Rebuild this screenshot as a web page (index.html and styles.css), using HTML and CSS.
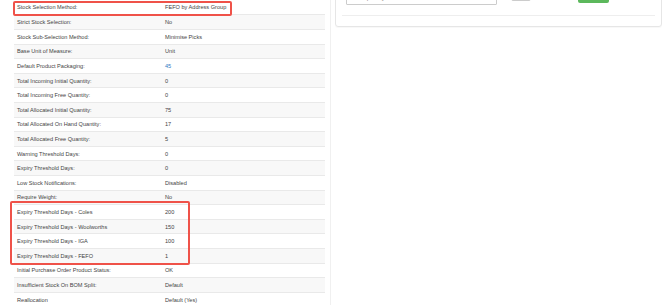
FILE: index.html
```html
<!doctype html>
<html lang="en">
    <head>
        <meta charset="UTF-8" />
        <meta name="viewport" content="width=device-width, initial-scale=1.0" />
        <title>Product Stock Settings</title>
        <link rel="stylesheet" href="styles.css">
    </head>
    <body>
        <div class="page">
            <div class="left">
                <table class="details">
                    <tr><td class="label">Stock Selection Method:</td><td>FEFO by Address Group</td></tr>
                    <tr><td class="label">Strict Stock Selection:</td><td>No</td></tr>
                    <tr><td class="label">Stock Sub-Selection Method:</td><td>Minimise Picks</td></tr>
                    <tr><td class="label">Base Unit of Measure:</td><td>Unit</td></tr>
                    <tr><td class="label">Default Product Packaging:</td><td><a href="#">45</a></td></tr>
                    <tr><td class="label">Total Incoming Initial Quantity:</td><td>0</td></tr>
                    <tr><td class="label">Total Incoming Free Quantity:</td><td>0</td></tr>
                    <tr><td class="label">Total Allocated Initial Quantity:</td><td>75</td></tr>
                    <tr><td class="label">Total Allocated On Hand Quantity:</td><td>17</td></tr>
                    <tr><td class="label">Total Allocated Free Quantity:</td><td>5</td></tr>
                    <tr><td class="label">Warning Threshold Days:</td><td>0</td></tr>
                    <tr><td class="label">Expiry Threshold Days:</td><td>0</td></tr>
                    <tr><td class="label">Low Stock Notifications:</td><td>Disabled</td></tr>
                    <tr><td class="label">Require Weight:</td><td>No</td></tr>
                    <tr><td class="label">Expiry Threshold Days - Coles</td><td>200</td></tr>
                    <tr><td class="label">Expiry Threshold Days - Woolworths</td><td>150</td></tr>
                    <tr><td class="label">Expiry Threshold Days - IGA</td><td>100</td></tr>
                    <tr><td class="label">Expiry Threshold Days - FEFO</td><td>1</td></tr>
                    <tr><td class="label">Initial Purchase Order Product Status:</td><td>OK</td></tr>
                    <tr><td class="label">Insufficient Stock On BOM Split:</td><td>Default</td></tr>
                    <tr><td class="label">Reallocation</td><td>Default (Yes)</td></tr>
                </table>
                <div class="highlight highlight-method"></div>
                <div class="highlight highlight-expiry"></div>
            </div>
            <div class="right">
                <div class="panel">
                    <div class="controls">
                        <input type="text" class="qty" placeholder="Enter quantity" />
                        <button class="btn-cancel"></button>
                        <button class="btn-save"></button>
                    </div>
                    <hr />
                </div>
            </div>
        </div>
    </body>
</html>
```

FILE: styles.css
```css
body {
    font-family: "Liberation Sans", Arial, sans-serif;
    background-color: #fff;
    margin: 0;
    padding: 0;
    color: #444;
    overflow: hidden;
}

.page {
    display: flex;
    align-items: flex-start;
}

.left {
    position: relative;
    flex: none;
    width: 311px;
    height: 320px;
    margin-left: 5px;
    padding: 0 5px 0 9px;
    border-right: 1px solid #f0f0f0;
}

.details {
    width: 311px;
    table-layout: fixed;
    border-collapse: collapse;
    margin-top: 0.4px;
    font-size: 5.6px;
}

.details td {
    height: 14.6px;
    padding: 0 3px;
    border-top: 1px solid #e9e9e9;
    box-sizing: border-box;
    vertical-align: middle;
    white-space: nowrap;
}

.details tr:first-child td {
    border-top: none;
}

.details td.label {
    width: 148px;
}

.details tr:nth-child(even) {
    background-color: #f8f8f8;
}

.details a {
    color: #2f7bc4;
    text-decoration: none;
}

.highlight {
    position: absolute;
    border: 2px solid #ef5249;
    border-radius: 2px;
    box-sizing: border-box;
}

.highlight-method {
    left: 8px;
    top: 0.5px;
    width: 219px;
    height: 15px;
}

.highlight-expiry {
    left: 5px;
    top: 201px;
    width: 180px;
    height: 63.5px;
}

.right {
    flex: none;
    margin-left: 4px;
}

.panel {
    width: 313px;
    margin-top: -26px;
    padding: 6px 6px 10px;
    border: 1px solid #e6e6e6;
    border-radius: 3px;
    box-shadow: 0 1px 1px rgba(0, 0, 0, 0.03);
}

.controls {
    display: flex;
    align-items: flex-end;
    height: 24px;
}

.qty {
    width: 151px;
    height: 14px;
    margin-left: 4px;
    box-sizing: border-box;
    border: 1px solid #ccc;
    border-radius: 1px;
    font-size: 5.6px;
    padding: 0 3px;
    font-family: inherit;
}

.btn-cancel {
    width: 20px;
    height: 14px;
    margin: 0 0 4px 14px;
    border: 1px solid #ccc;
    border-radius: 2px;
    background-color: #fff;
}

.btn-save {
    width: 31px;
    height: 14px;
    margin: 0 0 2.3px 47px;
    border: none;
    border-radius: 2px;
    background-color: #5cb85c;
}

hr {
    margin: 10px 0 0;
    border: none;
    border-top: 1px solid #eee;
}
```
